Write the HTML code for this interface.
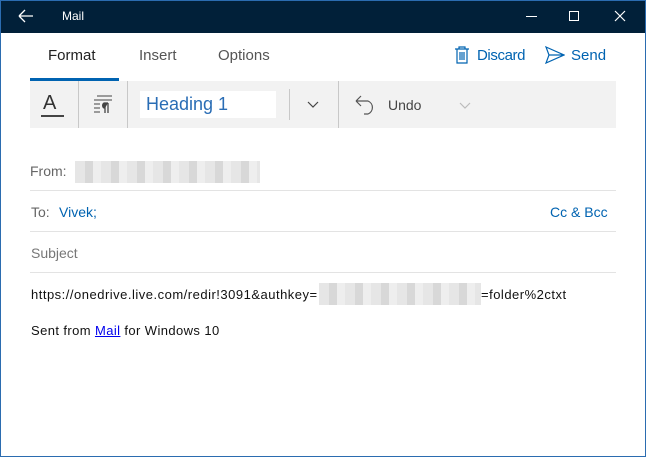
<!DOCTYPE html>
<html><head><style>
*{margin:0;padding:0;box-sizing:border-box}
body{width:646px;height:457px;overflow:hidden;background:#fff;font-family:"Liberation Sans",sans-serif;position:relative}
.win{position:absolute;left:0;top:0;width:646px;height:457px;border:1px solid #2b6cb0;}
.title{position:absolute;left:0;top:0;width:646px;height:33px;background:#012039;color:#fff}
.a{position:absolute;white-space:nowrap}
.gray{color:#666}
.blue{color:#0063b1}
.line{position:absolute;left:30px;width:586px;height:1px;background:#e3e3e3}
.sep{position:absolute;top:81px;width:1px;height:47px;background:#c8c8c8}
.blur{position:absolute;background:repeating-linear-gradient(90deg,#e6e6e6 0 10px,#d8d8d8 10px 18px,#eee 18px 26px)}
</style></head><body>
<div class="title">
<svg class="a" style="left:18px;top:9px" width="16" height="14"><path d="M1 7H15M1 7L7 1M1 7L7 13" stroke="#fff" stroke-width="1.3" fill="none"/></svg>
<div class="a" style="left:62px;top:9px;font-size:12px">Mail</div>
<div class="a" style="left:526px;top:16px;width:11px;height:1px;background:#fff"></div>
<div class="a" style="left:569px;top:11px;width:10px;height:10px;border:1px solid #fff"></div>
<svg class="a" style="left:614px;top:10px" width="12" height="12"><path d="M1 1L11 11M11 1L1 11" stroke="#fff" stroke-width="1.2"/></svg>
</div>
<div class="win"></div>
<div class="a" style="left:48px;top:47px;font-size:15px;color:#222">Format</div>
<div class="a gray" style="left:139px;top:47px;font-size:15px;color:#555">Insert</div>
<div class="a gray" style="left:218px;top:47px;font-size:15px;color:#555">Options</div>
<div class="a" style="left:30px;top:78px;width:89px;height:3px;background:#0063b1"></div>
<svg class="a" style="left:454px;top:46px" width="16" height="18"><path d="M1 3H15M5 3V1H11V3M3 3V17H13V3M6 6V14M8 6V14M10 6V14" stroke="#0063b1" stroke-width="1.2" fill="none"/></svg>
<div class="a blue" style="left:477px;top:47px;font-size:15px;letter-spacing:-0.4px">Discard</div>
<svg class="a" style="left:545px;top:46px" width="20" height="18"><path d="M1 1L19 9L1 17L4 9Z M4 9H19" stroke="#0063b1" stroke-width="1.2" fill="none"/></svg>
<div class="a blue" style="left:571px;top:47px;font-size:15px">Send</div>
<div class="a" style="left:30px;top:81px;width:586px;height:47px;background:#f2f2f2"></div>
<div class="sep" style="left:78px"></div><div class="sep" style="left:127px"></div>
<div class="sep" style="left:289px;top:89px;height:31px"></div><div class="sep" style="left:338px"></div>
<div class="a" style="left:43px;top:92px;font-size:20px;color:#333">A</div>
<div class="a" style="left:41px;top:115px;width:23px;height:2px;background:#444"></div>
<svg class="a" style="left:93px;top:95px" width="20" height="20"><path d="M4 1H19M1 5H19M1 9H7M1 13H7M1 17H7" stroke="#444" stroke-width="1"/><path d="M12 8V18M15 8V18M15 8H11A3 3 0 0 0 11 13H12" stroke="#444" stroke-width="1.3" fill="#444"/></svg>
<div class="a" style="left:140px;top:91px;width:136px;height:27px;background:#fff"></div>
<div class="a blue" style="left:146px;top:94px;font-size:18px;color:#2a6db5">Heading 1</div>
<svg class="a" style="left:307px;top:101px" width="12" height="8"><path d="M1 1L6 6L11 1" stroke="#444" stroke-width="1.2" fill="none"/></svg>
<svg class="a" style="left:354px;top:95px" width="24" height="20"><path d="M2 6H14A7 7 0 0 1 14 19H10M2 6L7 1M2 6L7 11" stroke="#555" stroke-width="1.2" fill="none"/></svg>
<div class="a" style="left:388px;top:97px;font-size:14px;color:#444">Undo</div>
<svg class="a" style="left:459px;top:102px" width="12" height="8"><path d="M1 1L6 6L11 1" stroke="#bbb" stroke-width="1.2" fill="none"/></svg>
<div class="a gray" style="left:30px;top:163px;font-size:14px">From:</div>
<div class="blur" style="left:75px;top:161px;width:185px;height:22px"></div>
<div class="line" style="top:190px"></div>
<div class="a gray" style="left:31px;top:204px;font-size:14px">To:</div>
<div class="a blue" style="left:59px;top:204px;font-size:14px">Vivek;</div>
<div class="a blue" style="left:550px;top:204px;font-size:14px">Cc &amp; Bcc</div>
<div class="line" style="top:231px"></div>
<div class="a gray" style="left:31px;top:245px;font-size:14px;color:#777">Subject</div>
<div class="line" style="top:272px"></div>
<div class="a" style="left:31px;top:287px;font-size:13px;color:#111;letter-spacing:0.5px">https://onedrive.live.com/redir!3091&amp;authkey=</div>
<div class="blur" style="left:319px;top:283px;width:162px;height:22px"></div>
<div class="a" style="left:481px;top:287px;font-size:13px;color:#111;letter-spacing:0.5px">=folder%2ctxt</div>
<div class="a" style="left:31px;top:323px;font-size:13px;color:#111;letter-spacing:0.4px">Sent from <span style="color:#00e;text-decoration:underline">Mail</span> for Windows 10</div>
</body></html>
